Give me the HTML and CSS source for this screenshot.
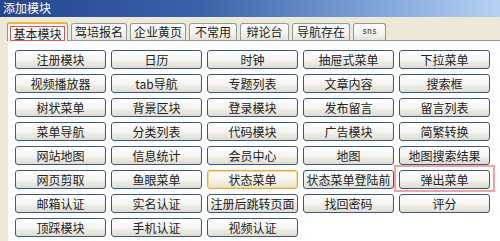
FILE: index.html
```html
<!DOCTYPE html>
<html lang="zh">
<head>
  <meta charset="UTF-8" />
  <title>添加模块</title>
  <link rel="stylesheet" href="styles.css">
</head>
<body>
  <div class="titlebar">添加模块</div>
  <div class="tabs">
    <div class="tab active w1"><span class="mark">基本模块</span></div>
    <div class="tab w2">驾培报名</div>
    <div class="tab w2">企业黄页</div>
    <div class="tab w4">不常用</div>
    <div class="tab w5">辩论台</div>
    <div class="tab w6">导航存在</div>
    <div class="tab w7 small">sns</div>
  </div>
  <div class="panel">
    <div class="grid">
      <div class="btn">注册模块</div>
      <div class="btn">日历</div>
      <div class="btn">时钟</div>
      <div class="btn">抽屉式菜单</div>
      <div class="btn">下拉菜单</div>

      <div class="btn">视频播放器</div>
      <div class="btn">tab导航</div>
      <div class="btn">专题列表</div>
      <div class="btn">文章内容</div>
      <div class="btn">搜索框</div>

      <div class="btn">树状菜单</div>
      <div class="btn">背景区块</div>
      <div class="btn">登录模块</div>
      <div class="btn">发布留言</div>
      <div class="btn">留言列表</div>

      <div class="btn">菜单导航</div>
      <div class="btn">分类列表</div>
      <div class="btn">代码模块</div>
      <div class="btn">广告模块</div>
      <div class="btn">简繁转换</div>

      <div class="btn">网站地图</div>
      <div class="btn">信息统计</div>
      <div class="btn">会员中心</div>
      <div class="btn">地图</div>
      <div class="btn">地图搜索结果</div>

      <div class="btn">网页剪取</div>
      <div class="btn">鱼眼菜单</div>
      <div class="btn hover">状态菜单</div>
      <div class="btn">状态菜单登陆前</div>
      <div class="btn picked">弹出菜单</div>

      <div class="btn">邮箱认证</div>
      <div class="btn">实名认证</div>
      <div class="btn">注册后跳转页面</div>
      <div class="btn">找回密码</div>
      <div class="btn">评分</div>

      <div class="btn">顶踩模块</div>
      <div class="btn">手机认证</div>
      <div class="btn">视频认证</div>
    </div>
  </div>
</body>
</html>
```

FILE: styles.css
```css
body {
  margin: 0;
  background-color: #ece9d8;
  font-family: "Noto Sans CJK SC", "DejaVu Sans", sans-serif;
  font-size: 12px;
  color: #222;
  height: 241px;
  overflow: hidden;
}

.titlebar {
  height: 17px;
  line-height: 16px;
  padding-left: 3px;
  color: #fff;
  background: linear-gradient(to right, #24468f 0%, #3a62a8 40%, #7ea4d8 75%, #b4d2f2 100%);
}

.tabs {
  display: flex;
  align-items: flex-end;
  gap: 3px;
  margin-left: 7px;
  padding-top: 5px;
  height: 18px;
}

.tab {
  box-sizing: border-box;
  height: 17px;
  line-height: 16px;
  text-align: center;
  border: 1px solid #919b9c;
  border-bottom: none;
  border-radius: 3px 3px 0 0;
  background: linear-gradient(#ffffff, #f3f3ef 60%, #e4e2da);
  white-space: nowrap;
}

.tab.active {
  height: 19px;
  margin-bottom: -1px;
  background: #fcfcfe;
  border-top: 2px solid #f0b040;
  padding-top: 2px;
  position: relative;
  z-index: 1;
}

.mark {
  display: inline-block;
  border: 1px solid #e05050;
  padding: 0 2px;
  line-height: 13px;
}

.w1 { width: 61px; }
.w2 { width: 56px; }
.w4 { width: 48px; }
.w5 { width: 49px; }
.w6 { width: 58px; }
.w7 { width: 33px; }

.small {
  font-size: 8px;
  font-family: "DejaVu Sans Mono", monospace;
}

.panel {
  margin-left: 8px;
  background: #fff;
  border-top: 1px solid #919b9c;
  height: 200px;
  padding: 9px 0 0 7px;
}

.grid {
  display: grid;
  grid-template-columns: repeat(5, 91px);
  grid-auto-rows: 19px;
  column-gap: 5px;
  row-gap: 5px;
}

.btn {
  box-sizing: border-box;
  border: 1px solid #3d5878;
  border-radius: 3px;
  background: linear-gradient(#ffffff, #f4f4f0 50%, #dcdcd4);
  text-align: center;
  line-height: 17px;
  white-space: nowrap;
}

.btn.hover {
  border-color: #e8a848;
  box-shadow: inset 0 0 0 1px #f8d898;
  background: linear-gradient(#fffef8, #f6f3e8 50%, #e8e2cc);
}

.btn.picked {
  position: relative;
}

.btn.picked::after {
  content: "";
  position: absolute;
  top: -6px;
  bottom: -4px;
  left: -6px;
  right: -6px;
  border: 2px solid #f2a0a0;
}
```
